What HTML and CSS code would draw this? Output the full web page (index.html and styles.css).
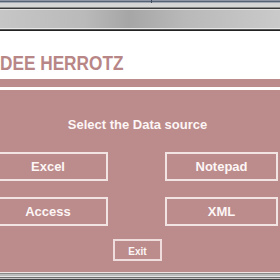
FILE: index.html
```html
<!DOCTYPE html>
<html>
<head>
	<title>Data source</title>
	<link rel="stylesheet" href="styles.css">
</head>
<body>
	<div class="chrome-top">
		<div class="caption"><span class="split"></span></div>
		<div class="ribbon-edge"></div>
		<div class="ribbon"></div>
		<div class="ribbon-foot"></div>
	</div>
	<div class="title"><span>DEE HERROTZ</span></div>
	<div class="band"></div>
	<div class="panel">
		<h2>Select the Data source</h2>
		<div class="choices">
			<button>Excel</button>
			<button>Notepad</button>
			<button>Access</button>
			<button>XML</button>
		</div>
		<button class="exit">Exit</button>
	</div>
	<div class="chrome-bottom"></div>
</body>
</html>
```

FILE: styles.css
```css
html, body {
	margin: 0;
	width: 280px;
	height: 280px;
	overflow: hidden;
	background: white;
	font-family: "Liberation Sans", Arial, sans-serif;
}
.chrome-top {
	height: 31px;
}
.caption {
	height: 3px;
	background: linear-gradient(#8c96a6 0, #8c96a6 1px, #586275 1px, #586275 2px, #a3a8b0 2px);
	position: relative;
}
.split {
	position: absolute;
	left: 151px;
	top: 0;
	width: 1px;
	height: 3px;
	background: #3e4a5e;
}
.ribbon-edge {
	height: 7px;
	background: linear-gradient(#d6d6d6 0, #d6d6d6 4px, #8a8a8a 4px, #8a8a8a 5px, #3a3a3a 5px, #3a3a3a 6px, #e2e2e2 6px);
}
.ribbon {
	height: 18px;
	background: linear-gradient(90deg, #c6c6c6, #bababa 30%, #a6a6a6 46%, #b9b9b9 66%, #cacaca);
}
.ribbon-foot {
	height: 3px;
	background: linear-gradient(#e8e8e8 0, #e8e8e8 1px, #555 1px, #555 2px, #222 2px);
}
.title {
	box-sizing: border-box;
	height: 48px;
	padding-top: 21px;
	line-height: 21px;
	font-weight: bold;
	font-size: 21px;
	color: #b88686;
	white-space: nowrap;
}
.title span {
	display: inline-block;
	transform: scaleX(0.82);
	transform-origin: left;
}
.band {
	height: 8px;
	background: #bc8b8b;
	border-bottom: 3px solid white;
}
.panel {
	box-sizing: border-box;
	height: 182px;
	background: #bc8b8b;
	padding: 27px 5px 0 0;
	display: flex;
	flex-direction: column;
	align-items: center;
}
h2 {
	margin: 0;
	font-size: 13px;
	line-height: 16px;
	font-weight: bold;
	color: #fdf6f6;
}
.choices {
	align-self: flex-start;
	margin: 19px 0 0 -12px;
	display: grid;
	grid-template-columns: 120px 113px;
	column-gap: 57px;
	row-gap: 16px;
}
button {
	box-sizing: border-box;
	height: 29px;
	background: transparent;
	border: 2px solid #f3e4e4;
	color: #fdf6f6;
	font-family: "Liberation Sans", Arial, sans-serif;
	font-weight: bold;
	font-size: 13px;
	padding: 0;
}
.exit {
	margin-top: 13px;
	width: 49px;
	height: 22px;
	font-size: 10px;
	padding-top: 3px;
	border-color: #efdcdc;
}
.chrome-bottom {
	height: 8px;
	background: linear-gradient(#f0e4e4 0, #f0e4e4 1px, #8a8a8a 1px, #8a8a8a 2px, #bcbcbc 2px, #bcbcbc 4px, #e6e6e6 4px, #e6e6e6 5px, #707070 5px, #707070 6px, #c4c4c4 6px, #c4c4c4 7px, #444 7px);
}
```
